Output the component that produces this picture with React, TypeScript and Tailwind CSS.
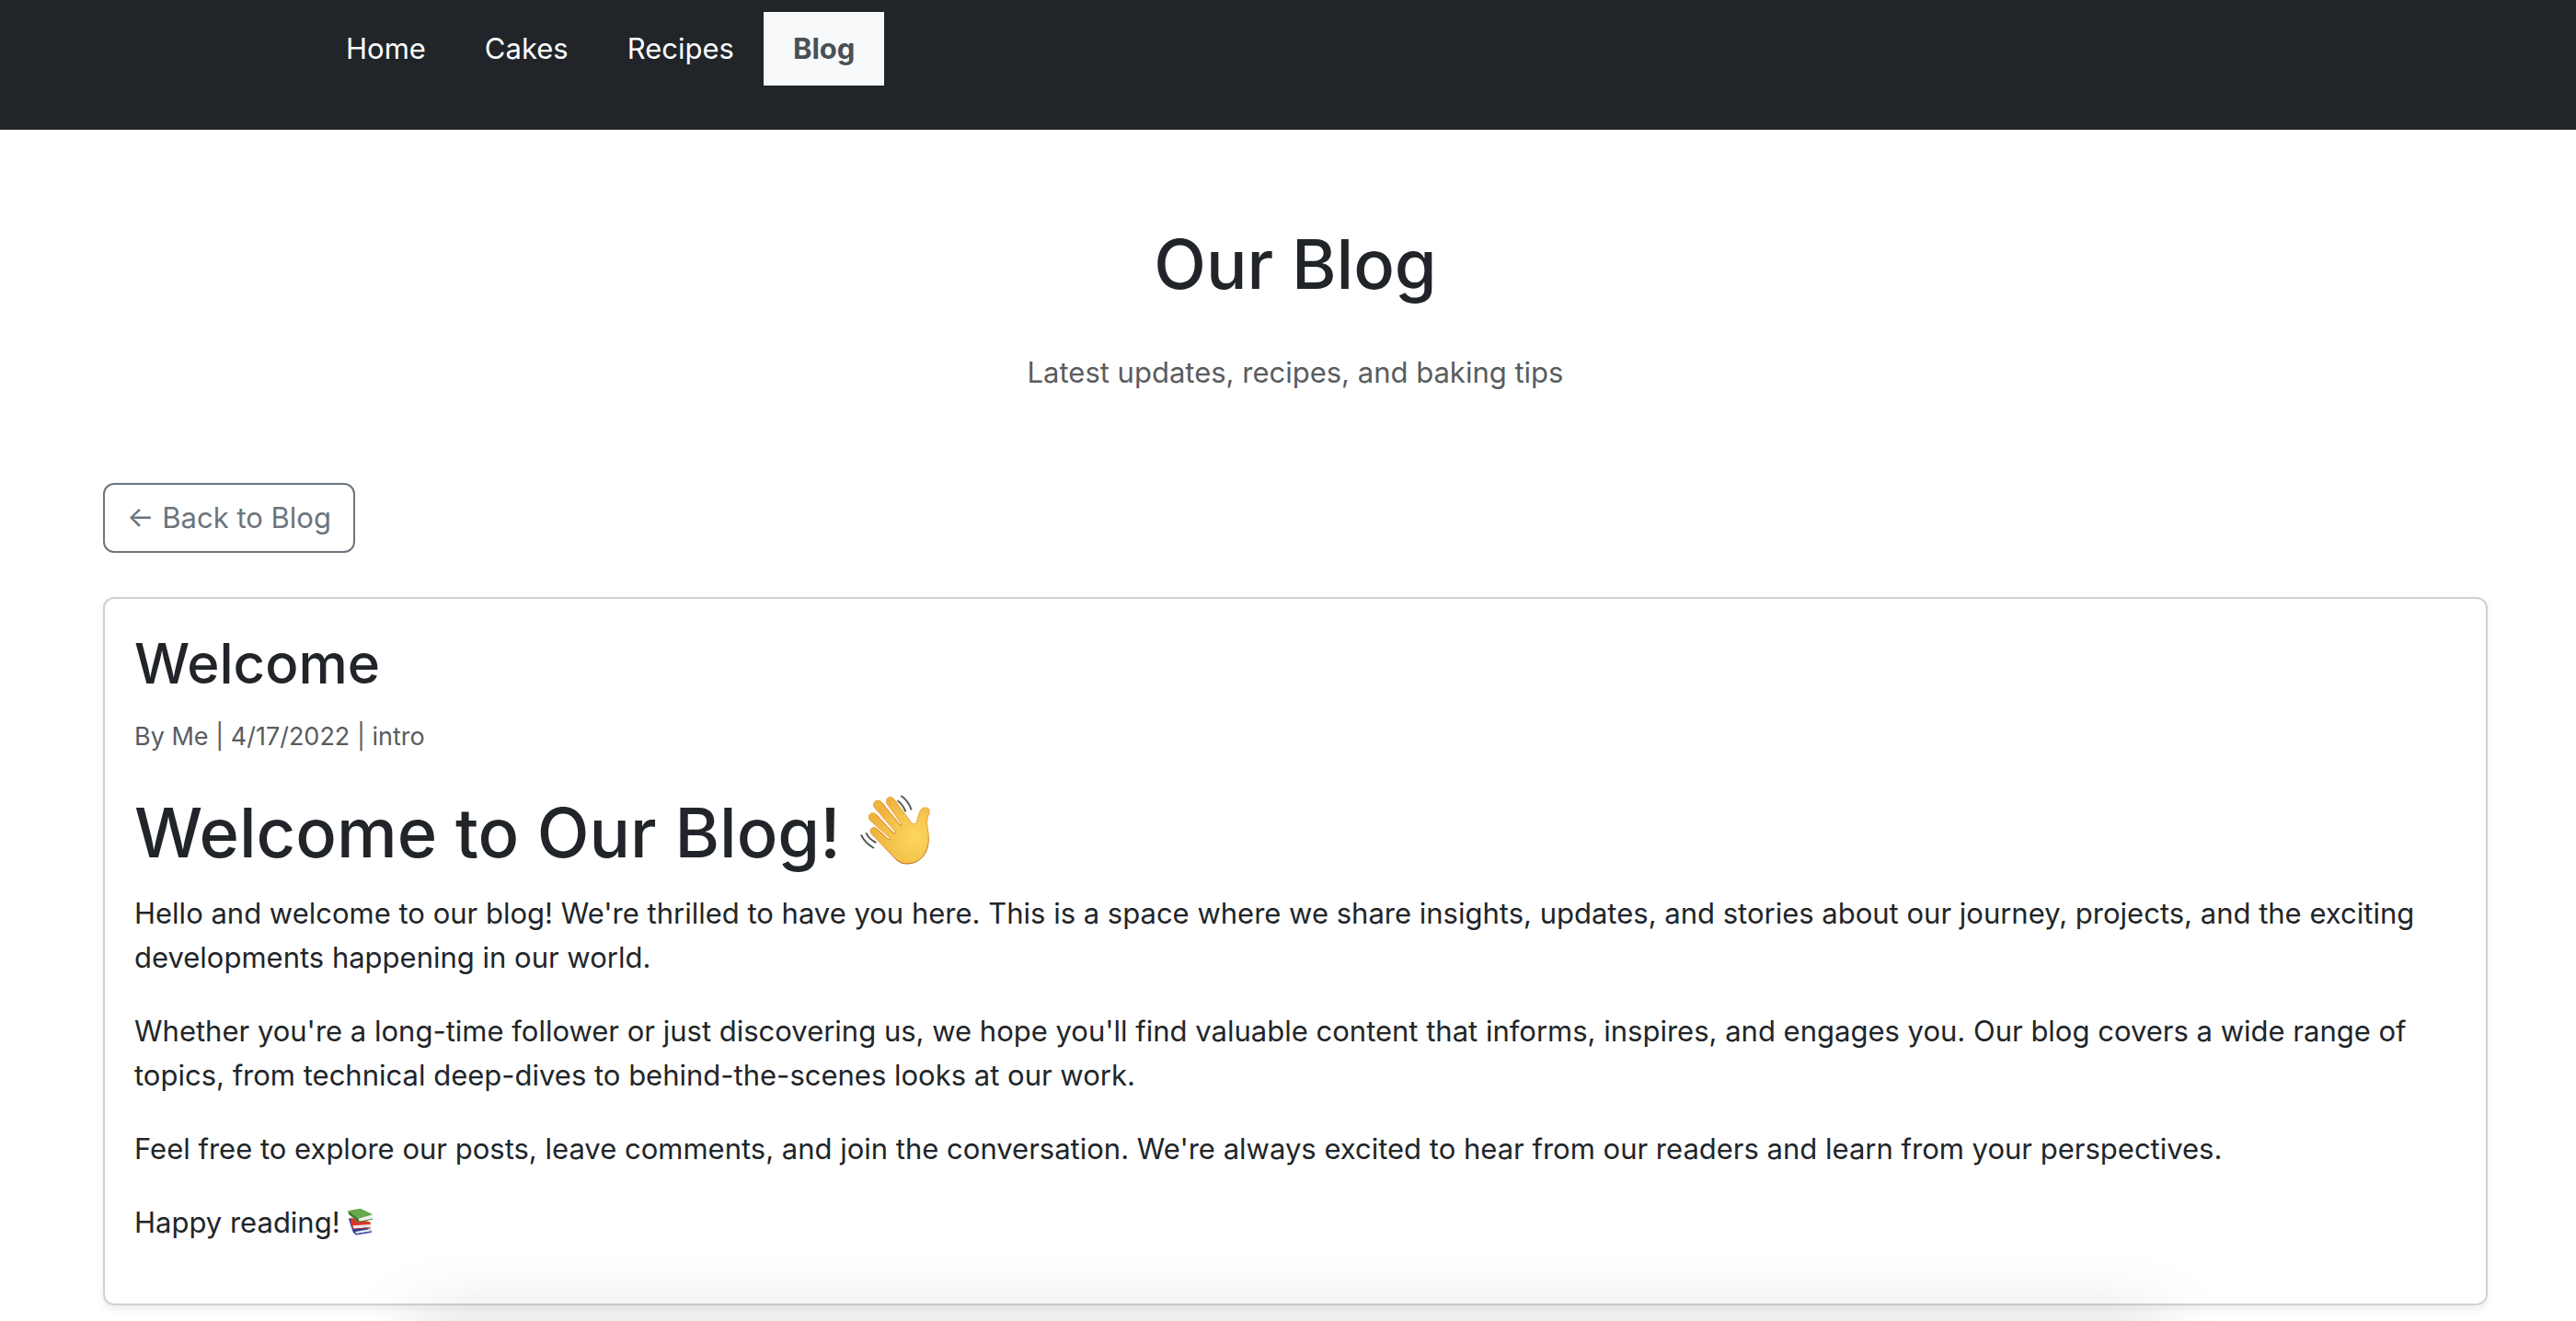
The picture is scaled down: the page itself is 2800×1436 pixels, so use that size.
import { ReactNode } from 'react';

const links = ['Home', 'Cakes', 'Recipes'];

function WavingHand() {
  return (
    <svg viewBox="0 0 240 240" className="inline-block h-20 w-20 align-[-10px]" role="img" aria-label="waving hand">
      <defs>
        <radialGradient id="palm" cx="0.76" cy="0.6" r="0.7">
          <stop offset="0" stopColor="#fcd75c" />
          <stop offset="0.5" stopColor="#f5c64e" />
          <stop offset="1" stopColor="#eeb23f" />
        </radialGradient>
        <linearGradient id="palmEdge" x1="0" y1="0" x2="0.3" y2="1">
          <stop offset="0.7" stopColor="#e8a23a" />
          <stop offset="1" stopColor="#b8681c" />
        </linearGradient>
      </defs>
      <path
        d="M43 134c-6-7-5-15 0-19 6-5 13-3 18 2l37 34c3 3 7-1 4-5L38 89c-6-7-5-16 1-21 6-5 14-3 20 3l56 60c3 3 7-1 5-5L53 48c-6-8-4-16 2-21 7-5 15-3 21 4l60 74c3 3 6 0 4-4L94 36c-5-9-3-17 4-21 8-4 15 0 20 7l54 74c6 8 16 7 19-3l7-26c4-13 11-20 22-19 10 1 14 8 11 17-4 12-8 19-7 33 2 22 6 39 5 57-2 43-28 75-70 76-22 0-34-10-49-28z"
        fill="url(#palm)"
        stroke="url(#palmEdge)"
        strokeWidth="3"
      />
      <path d="M60 119l38 33q5 2 5-4M59 72l56 60q6 3 6-4M77 32l59 73q6 2 5-4" fill="none" stroke="#d78b29" strokeWidth="3" strokeLinecap="round" />
      <path d="M139 9q25 17 34 46M128 25q18 14 26 36M9 136q11 26 42 44M25 130q10 21 33 32" fill="none" stroke="#55585c" strokeWidth="6" />
    </svg>
  );
}

function Books() {
  return (
    <svg viewBox="0 0 84 90" className="inline-block h-[30px] w-7 align-[-3px]" role="img" aria-label="books">
      <path d="M2 34l10 2 64 36 1 6-50 9-10-8z" fill="#2b3f9f" />
      <path d="M24 78l50-9 2 7-48 8z" fill="#eceef2" />
      <path d="M23 79q-3 6 4 8l50-8" fill="none" stroke="#2b3f9f" strokeWidth="3" />
      <path d="M9 32l64 14 2 9-58 8-6-10z" fill="#d6382b" />
      <path d="M16 58l56-4 2 9-55 6z" fill="#e9e9e9" />
      <path d="M14 56q-3 9 5 13l56-4" fill="none" stroke="#b8271e" strokeWidth="3" />
      <path d="M2 9l40-7 40 20-46 13z" fill="#65a94a" />
      <path d="M2 9l34 26v12L4 22q-4-6-2-13z" fill="#3d7c2b" />
      <path d="M36 36l45-12-1 10-43 10z" fill="#f0f0ee" />
      <path d="M35 36q-3 7 2 10l45-10" fill="none" stroke="#3f862d" strokeWidth="3" />
    </svg>
  );
}

function Paragraph({ children }: { children: ReactNode }) {
  return <p className="mb-8">{children}</p>;
}

export default function App() {
  return (
    <div className="relative min-h-screen overflow-hidden bg-white font-['Inter','Liberation_Sans',sans-serif] text-[31px] leading-[48px] text-[#212529]">
      <nav className="flex bg-[#212529] pt-[13px] pb-12 pl-[344px]">
        {links.map((label) => (
          <a key={label} href="#" className="px-8 py-4 text-white">
            {label}
          </a>
        ))}
        <a href="#" aria-current="page" className="bg-[#f8f9fa] px-8 py-4 font-bold text-[#495057]">
          Blog
        </a>
      </nav>

      <main className="pr-24 pl-28">
        <header className="pt-[98px] text-center">
          <h1 className="text-[74px] leading-[96px] font-medium">Our Blog</h1>
          <p className="mt-[46px] text-[#595c5f]">Latest updates, recipes, and baking tips</p>
        </header>

        <button type="button" className="mt-24 flex items-center rounded-xl border-2 border-[#6c757d] px-6 py-3 text-[#6c757d]">
          ← Back to Blog
        </button>

        <article className="mt-12 rounded-xl border-2 border-[#d0d1d1] p-8 shadow-[0_4px_8px_rgba(0,0,0,0.075)]">
          <h2 className="text-[60px] leading-[76px] font-medium">Welcome</h2>
          <p className="mt-4 text-[#595c5f]">
            <small className="text-[27px]">By Me | 4/17/2022 | intro</small>
          </p>
          <div className="mt-8">
            <h1 className="mb-4 h-24 text-[74px] leading-[96px] font-medium">
              Welcome to Our Blog! <WavingHand />
            </h1>
            <Paragraph>
              Hello and welcome to our blog! We're thrilled to have you here. This is a space where we share insights, updates, and
              stories about our journey, projects, and the exciting developments happening in our world.
            </Paragraph>
            <Paragraph>
              Whether you're a long-time follower or just discovering us, we hope you'll find valuable content that informs,
              inspires, and engages you. Our blog covers a wide range of topics, from technical deep-dives to behind-the-scenes
              looks at our work.
            </Paragraph>
            <Paragraph>
              Feel free to explore our posts, leave comments, and join the conversation. We're always excited to hear from our
              readers and learn from your perspectives.
            </Paragraph>
            <Paragraph>
              Happy reading! <Books />
            </Paragraph>
          </div>
        </article>
      </main>

      <div className="pointer-events-none absolute inset-x-[450px] -bottom-40 h-40 shadow-[0_0_80px_rgba(0,0,0,0.15)]" />
    </div>
  );
}
